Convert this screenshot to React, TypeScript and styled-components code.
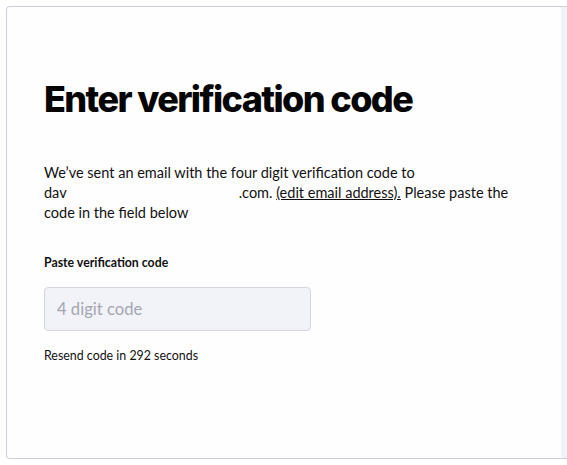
import React from "react";
import styled, { createGlobalStyle } from "styled-components";

const Global = createGlobalStyle`
  html, body { margin: 0; padding: 0; background: #ffffff; overflow: hidden; }
  body { font-family: "Lato", "Inter", sans-serif; color: #111111; }
`;

const Page = styled.div`
  padding: 6px 0 0 6px;
`;

const Card = styled.div`
  display: flex;
  height: 451px;
  border: 1px solid #cfcfd8;
  border-right: none;
  border-radius: 4px 0 0 4px;
  background: #fefefe;
`;

const Main = styled.div`
  width: 517px;
  flex: none;
  padding: 70px 0 0 37px;
  display: flex;
  flex-direction: column;
`;

const Side = styled.div`
  flex: 1;
  background: #f2f3f8;
`;

const Title = styled.h1`
  margin: 0;
  font-family: "Inter", sans-serif;
  font-weight: 800;
  font-size: 36px;
  line-height: 44px;
  letter-spacing: -1.6px;
  color: #050505;
`;

const Text = styled.p`
  margin: 42px 0 0;
  font-size: 14.5px;
  line-height: 20px;
  color: #111111;
`;

const Redacted = styled.span`
  display: inline-block;
  width: 172px;
`;

const EditLink = styled.a`
  color: #111111;
  text-decoration: underline;
  cursor: pointer;
`;

const Label = styled.label`
  margin-top: 32px;
  font-size: 12.3px;
  font-weight: 700;
  line-height: 16px;
  color: #111111;
`;

const Input = styled.input`
  margin-top: 16px;
  box-sizing: border-box;
  width: 267px;
  height: 44px;
  padding: 0 12px;
  border: 1px solid #d6d7de;
  border-radius: 4px;
  background: #f2f3f8;
  font-family: "Lato", sans-serif;
  font-size: 16.6px;
  color: #111111;
  outline: none;
  &::placeholder { color: #a3a6b1; }
`;

const Resend = styled.div`
  margin-top: 17px;
  font-size: 12.4px;
  line-height: 16px;
  color: #111111;
`;

export default function App() {
  return (
    <>
      <Global />
      <Page>
        <Card>
          <Main>
            <Title>Enter verification code</Title>
            <Text>
              We’ve sent an email with the four digit verification code to
              <br />
              dav<Redacted />.com. <EditLink>(edit email address).</EditLink> Please paste the
              <br />
              code in the field below
            </Text>
            <Label>Paste verification code</Label>
            <Input placeholder="4 digit code" />
            <Resend>Resend code in 292 seconds</Resend>
          </Main>
          <Side />
        </Card>
      </Page>
    </>
  );
}
